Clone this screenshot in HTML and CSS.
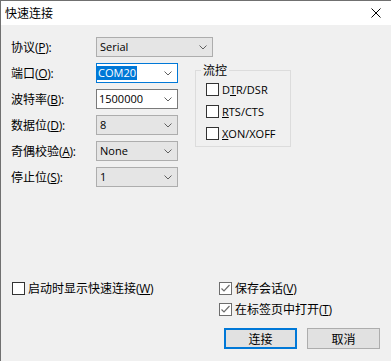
FILE: index.html
```html
<!DOCTYPE html>
<html lang="zh-CN">
<head>
    <meta charset="UTF-8">
    <meta name="viewport" content="width=device-width, initial-scale=1.0">
    <title>快速连接</title>
    <link rel="stylesheet" href="styles.css">
</head>
<body>
    <div class="window">
        <!-- Title bar -->
        <div class="titlebar">
            <span class="title">快速连接</span>
            <svg class="close" width="10" height="10" viewBox="0 0 10 10">
                <path d="M0.5 0.5 L9.5 9.5 M9.5 0.5 L0.5 9.5" stroke="#000" stroke-width="1" fill="none"/>
            </svg>
        </div>

        <div class="content">
            <!-- Protocol -->
            <div class="row">
                <span class="label">协议<span class="key">(<u>P</u>):</span></span>
                <div class="combo combo-wide">
                    <span class="latin">Serial</span>
                    <svg class="chevron" width="8" height="5" viewBox="0 0 8 5"><polyline points="0.5,0.5 4,4 7.5,0.5" fill="none" stroke="#606060"/></svg>
                </div>
            </div>

            <div class="main">
                <div class="fields">
                    <div class="row">
                        <span class="label">端口<span class="key">(<u>O</u>):</span></span>
                        <div class="edit edit-focus">
                            <span class="latin selected">COM20</span>
                            <svg class="chevron" width="8" height="5" viewBox="0 0 8 5"><polyline points="0.5,0.5 4,4 7.5,0.5" fill="none" stroke="#606060"/></svg>
                        </div>
                    </div>
                    <div class="row">
                        <span class="label">波特率<span class="key">(<u>B</u>):</span></span>
                        <div class="edit">
                            <span class="latin">1500000</span>
                            <svg class="chevron" width="8" height="5" viewBox="0 0 8 5"><polyline points="0.5,0.5 4,4 7.5,0.5" fill="none" stroke="#606060"/></svg>
                        </div>
                    </div>
                    <div class="row">
                        <span class="label">数据位<span class="key">(<u>D</u>):</span></span>
                        <div class="combo">
                            <span class="latin">8</span>
                            <svg class="chevron" width="8" height="5" viewBox="0 0 8 5"><polyline points="0.5,0.5 4,4 7.5,0.5" fill="none" stroke="#606060"/></svg>
                        </div>
                    </div>
                    <div class="row">
                        <span class="label">奇偶校验<span class="key">(<u>A</u>):</span></span>
                        <div class="combo">
                            <span class="latin">None</span>
                            <svg class="chevron" width="8" height="5" viewBox="0 0 8 5"><polyline points="0.5,0.5 4,4 7.5,0.5" fill="none" stroke="#606060"/></svg>
                        </div>
                    </div>
                    <div class="row">
                        <span class="label">停止位<span class="key">(<u>S</u>):</span></span>
                        <div class="combo">
                            <span class="latin">1</span>
                            <svg class="chevron" width="8" height="5" viewBox="0 0 8 5"><polyline points="0.5,0.5 4,4 7.5,0.5" fill="none" stroke="#606060"/></svg>
                        </div>
                    </div>
                </div>

                <!-- Flow control -->
                <fieldset class="group">
                    <legend>流控</legend>
                    <label class="check"><span class="box"></span><span class="latin">D<u>T</u>R/DSR</span></label>
                    <label class="check"><span class="box"></span><span class="latin"><u>R</u>TS/CTS</span></label>
                    <label class="check"><span class="box"></span><span class="latin"><u>X</u>ON/XOFF</span></label>
                </fieldset>
            </div>

            <div class="footer">
                <div class="footer-left">
                    <label class="check"><span class="box"></span><span>启动时显示快速连接<span class="key">(<u>W</u>)</span></span></label>
                </div>
                <div class="footer-right">
                    <label class="check"><span class="box checked"><svg width="11" height="11" viewBox="0 0 11 11"><polyline points="1.5,5.5 4,8 9.5,2" fill="none" stroke="#6d6d6d" stroke-width="1.2"/></svg></span><span>保存会话<span class="key">(<u>V</u>)</span></span></label>
                    <label class="check"><span class="box checked"><svg width="11" height="11" viewBox="0 0 11 11"><polyline points="1.5,5.5 4,8 9.5,2" fill="none" stroke="#6d6d6d" stroke-width="1.2"/></svg></span><span>在标签页中打开<span class="key">(<u>T</u>)</span></span></label>
                    <div class="buttons">
                        <button class="btn btn-default">连接</button>
                        <button class="btn">取消</button>
                    </div>
                </div>
            </div>
        </div>
    </div>
</body>
</html>
```

FILE: styles.css
```css
body {
    margin: 0;
    background-color: #f0f0f0;
    font-family: "Noto Sans CJK SC", "Noto Sans", sans-serif;
    font-size: 12px;
    color: #000;
}

.window {
    border-top: 1px solid #707070;
    border-left: 1px solid #707070;
    min-height: 360px;
}

.titlebar {
    height: 24px;
    background-color: #fff;
    display: flex;
    align-items: center;
    justify-content: space-between;
    padding: 0 10px 0 4px;
}

.title {
    line-height: 16px;
}

.content {
    padding: 12px 11px 0 10px;
}

.row {
    display: flex;
    align-items: center;
    height: 20px;
}

.label {
    width: 85px;
    line-height: 16px;
}

.latin,
.key {
    font-family: "Open Sans", "Noto Sans", sans-serif;
    font-size: 11px;
}

.key {
    font-size: 12px;
    letter-spacing: -0.3px;
}

.combo,
.edit {
    box-sizing: border-box;
    width: 82px;
    height: 20px;
    display: flex;
    align-items: center;
    justify-content: space-between;
    padding: 0 5px 0 3px;
    line-height: 14px;
}

.combo {
    background-color: #e5e5e5;
    border: 1px solid #adadad;
}

.combo-wide {
    width: 117px;
}

.edit {
    background-color: #fff;
    border: 1px solid #7a7a7a;
    padding-left: 2px;
}

.edit-focus {
    border-color: #0078d7;
    padding-left: 0;
}

.selected {
    background-color: #0078d7;
    color: #fff;
    padding: 0 1px;
}

.chevron {
    flex: none;
}

.main {
    display: flex;
    align-items: flex-start;
    margin-top: 6px;
}

.fields {
    display: flex;
    flex-direction: column;
    gap: 6px;
}

.group {
    width: 96px;
    box-sizing: border-box;
    margin: 0 0 0 17px;
    padding: 4px 4px 5px 10px;
    border: 1px solid #dcdcdc;
    display: flex;
    flex-direction: column;
    gap: 6px;
}

.group legend {
    padding: 0 2px;
    margin-left: -5px;
    line-height: 14px;
}

.check {
    display: flex;
    align-items: center;
    gap: 3px;
    height: 16px;
    white-space: nowrap;
}

.box {
    box-sizing: border-box;
    width: 13px;
    height: 13px;
    border: 1px solid #333;
    background-color: #fff;
    flex: none;
    display: flex;
    align-items: center;
    justify-content: center;
}

.box.checked {
    border-color: #6d6d6d;
}

.footer {
    display: flex;
    justify-content: space-between;
    margin-top: 93px;
}

.footer-left {
    padding-left: 1px;
}

.footer-right {
    width: 161px;
    display: flex;
    flex-direction: column;
    gap: 5px;
}

.buttons {
    display: flex;
    gap: 10px;
    margin-top: 6px;
    padding-left: 5px;
}

.btn {
    box-sizing: border-box;
    width: 73px;
    height: 21px;
    padding: 0;
    font-family: inherit;
    font-size: 12px;
    background-color: #e1e1e1;
    border: 1px solid #adadad;
    color: #000;
}

.btn-default {
    border: 2px solid #0078d7;
}
```
